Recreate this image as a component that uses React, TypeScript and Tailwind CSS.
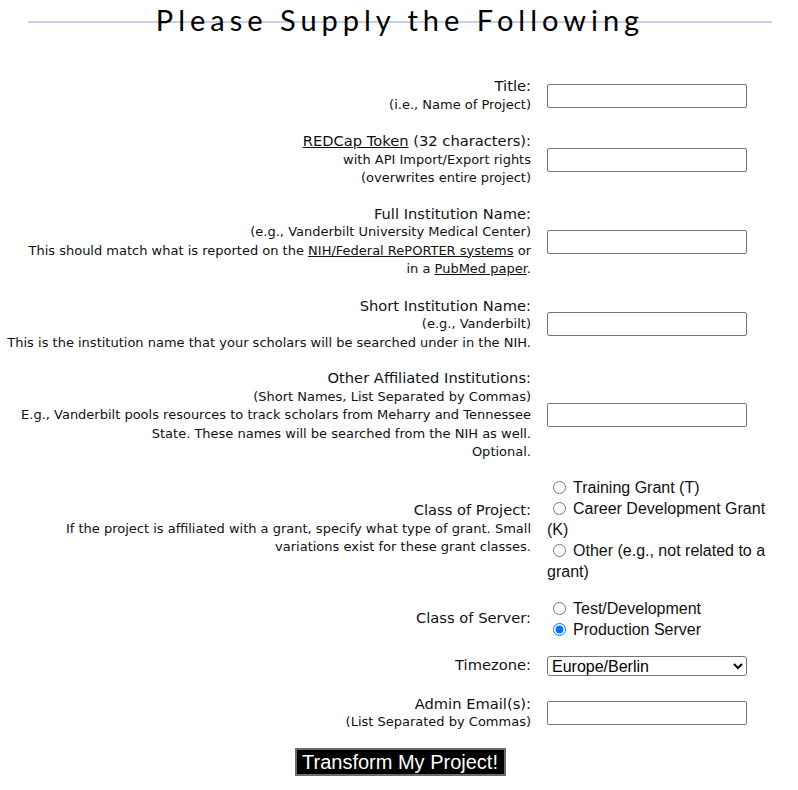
import React from "react";

const lab = "font-['DejaVu_Sans',sans-serif]";
const arial = "font-['Liberation_Sans',Arial,sans-serif]";

function Row({ children, right, mt = "mt-[17px]" }: { children: React.ReactNode; right: React.ReactNode; mt?: string }) {
  return (
    <div className={`flex items-center ${mt}`}>
      <div className={`w-[531px] shrink-0 text-right text-[#111] ${lab} leading-[18.5px]`}>{children}</div>
      <div className="ml-4 w-[235px] shrink-0">{right}</div>
    </div>
  );
}

const Input = () => (
  <input type="text" className="block h-6 w-[200px] rounded-[2px] border border-[#767676] bg-white" />
);

const Main = ({ children }: { children: React.ReactNode }) => <div className="text-[14.7px]">{children}</div>;
const Sub = ({ children }: { children: React.ReactNode }) => <div className="text-[13px] whitespace-nowrap">{children}</div>;

const Radio = ({ checked = false, children }: { checked?: boolean; children: React.ReactNode }) => (
  <div className="leading-[21px]">
    <input type="radio" defaultChecked={checked} className="m-0 mr-[7px] ml-[6px] h-[13px] w-[13px] align-[-1px]" />
    {children}
  </div>
);

export default function App() {
  return (
    <div className="w-[798px] h-[790px] bg-white text-black overflow-hidden">
      <div className="relative h-[44px]">
        <div className="absolute left-[28px] right-[26px] top-[21px] h-[2px] bg-[#ccceE6]" />
        <h1 className="relative text-center pt-[3px] pl-[2px] text-[29px] leading-[34px] tracking-[0.172em] font-['Lato',sans-serif] text-black">
          Please Supply the Following
        </h1>
      </div>

      <Row mt="mt-[33px]" right={<Input />}>
        <Main>Title:</Main>
        <Sub>(i.e., Name of Project)</Sub>
      </Row>

      <Row mt="mt-[18px]" right={<Input />}>
        <Main>
          <span className="underline">REDCap Token</span> (32 characters):
        </Main>
        <Sub>with API Import/Export rights</Sub>
        <Sub>(overwrites entire project)</Sub>
      </Row>

      <Row right={<Input />}>
        <Main>Full Institution Name:</Main>
        <Sub>(e.g., Vanderbilt University Medical Center)</Sub>
        <Sub>
          This should match what is reported on the <span className="underline">NIH/Federal RePORTER systems</span> or
        </Sub>
        <Sub>
          in a <span className="underline">PubMed paper</span>.
        </Sub>
      </Row>

      <Row mt="mt-[18px]" right={<Input />}>
        <Main>Short Institution Name:</Main>
        <Sub>(e.g., Vanderbilt)</Sub>
        <Sub>This is the institution name that your scholars will be searched under in the NIH.</Sub>
      </Row>

      <Row mt="mt-[17px]" right={<Input />}>
        <Main>Other Affiliated Institutions:</Main>
        <Sub>(Short Names, List Separated by Commas)</Sub>
        <Sub>E.g., Vanderbilt pools resources to track scholars from Meharry and Tennessee</Sub>
        <Sub>State. These names will be searched from the NIH as well.</Sub>
        <Sub>Optional.</Sub>
      </Row>

      <Row
        mt="mt-[15px]"
        right={
          <div className={`text-[16px] ${arial} text-[#111]`}>
            <Radio>Training Grant (T)</Radio>
            <Radio>
              Career Development Grant
              <br />
              (K)
            </Radio>
            <Radio>
              Other (e.g., not related to a
              <br />
              grant)
            </Radio>
          </div>
        }
      >
        <Main>Class of Project:</Main>
        <Sub>If the project is affiliated with a grant, specify what type of grant. Small</Sub>
        <Sub>variations exist for these grant classes.</Sub>
      </Row>

      <Row
        mt="mt-[16px]"
        right={
          <div className={`text-[16px] ${arial} text-[#111]`}>
            <Radio>Test/Development</Radio>
            <Radio checked>Production Server</Radio>
          </div>
        }
      >
        <Main>Class of Server:</Main>
      </Row>

      <Row
        mt="mt-[16px]"
        right={
          <select
            defaultValue="Europe/Berlin"
            className={`block h-5 w-[200px] rounded-[3px] border border-[#767676] bg-white text-[16px] leading-[18px] ${arial} text-black`}
          >
            <option>Europe/Berlin</option>
          </select>
        }
      >
        <Main>Timezone:</Main>
      </Row>

      <Row mt="mt-[19px]" right={<Input />}>
        <Main>Admin Email(s):</Main>
        <Sub>(List Separated by Commas)</Sub>
      </Row>

      <div className="mt-[16px] flex justify-center">
        <button className={`ml-[2px] h-[28px] w-[211px] border-2 border-[#6b6b6b] bg-black text-[20px] leading-[22px] text-white ${arial}`}>
          Transform My Project!
        </button>
      </div>
    </div>
  );
}
